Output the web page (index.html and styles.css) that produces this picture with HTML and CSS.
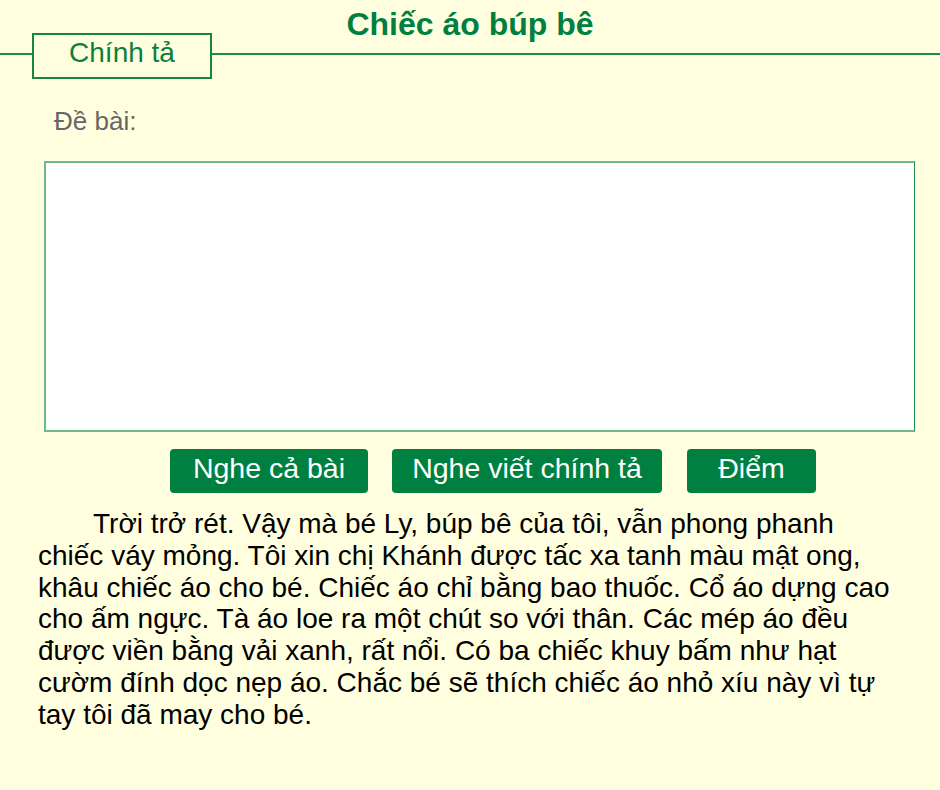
FILE: index.html
```html
<!DOCTYPE html>
<html lang="vi">
<head>
<meta charset="utf-8">
<title>Chiếc áo búp bê</title>
<link rel="stylesheet" href="styles.css">
</head>
<body>
<div class="page">
  <h1 class="title">Chiếc áo búp bê</h1>
  <div class="tabrow">
    <div class="tab">Chính tả</div>
  </div>
  <div class="label">Đề bài:</div>
  <div class="answer"></div>
  <div class="buttons">
    <button class="btn btn-all">Nghe cả bài</button>
    <button class="btn btn-dict">Nghe viết chính tả</button>
    <button class="btn btn-score">Điểm</button>
  </div>
  <p class="passage">Trời trở rét. Vậy mà bé Ly, búp bê của tôi, vẫn phong phanh chiếc váy mỏng. Tôi xin chị Khánh được tấc xa tanh màu mật ong, khâu chiếc áo cho bé. Chiếc áo chỉ bằng bao thuốc. Cổ áo dựng cao cho ấm ngực. Tà áo loe ra một chút so với thân. Các mép áo đều được viền bằng vải xanh, rất nổi. Có ba chiếc khuy bấm như hạt cườm đính dọc nẹp áo. Chắc bé sẽ thích chiếc áo nhỏ xíu này vì tự tay tôi đã may cho bé.</p>
</div>
</body>
</html>
```

FILE: styles.css
```css
html, body {
  margin: 0;
  padding: 0;
  background: #ffffdf;
}
body {
  font-family: "Liberation Sans", Arial, sans-serif;
  color: #000;
}
.page {
  width: 940px;
  height: 790px;
  overflow: hidden;
}
.title {
  margin: 0;
  padding-top: 6px;
  font-size: 32px;
  line-height: 37px;
  font-weight: bold;
  text-align: center;
  color: #007f3f;
}
.tabrow {
  margin-top: -10px;
  height: 46px;
  display: flex;
  padding-left: 32px;
  background: linear-gradient(to bottom, transparent 20px, #1f8a4c 20px, #1f8a4c 22px, transparent 22px);
}
.tab {
  width: 176px;
  height: 36px;
  padding-bottom: 6px;
  border: 2px solid #1a8446;
  background: #ffffdf;
  color: #0a7f40;
  font-size: 28px;
  line-height: 36px;
  text-align: center;
}
.label {
  margin-top: 27px;
  padding-left: 54px;
  font-size: 26px;
  line-height: 30px;
  color: #666666;
}
.answer {
  margin: 25px 0 0 44px;
  width: 868px;
  height: 267px;
  background: #ffffff;
  border: 2px solid #6cba8c;
  border-right: 1px solid #1f8f50;
}
.buttons {
  display: flex;
  gap: 24px;
  margin-top: 17px;
  padding-left: 170px;
}
.btn {
  height: 44px;
  padding: 0 0 6px;
  border: none;
  border-radius: 4px;
  background: #008040;
  color: #ffffff;
  font-family: "Liberation Sans", Arial, sans-serif;
  font-size: 28.5px;
  line-height: 38px;
  text-align: center;
}
.btn-all { width: 198px; }
.btn-dict { width: 270px; margin-right: 1px; }
.btn-score { width: 129px; }
.passage {
  margin: 15px 0 0;
  padding: 0 42px 0 38px;
  font-size: 28px;
  line-height: 31.75px;
  text-indent: 55px;
}
```
